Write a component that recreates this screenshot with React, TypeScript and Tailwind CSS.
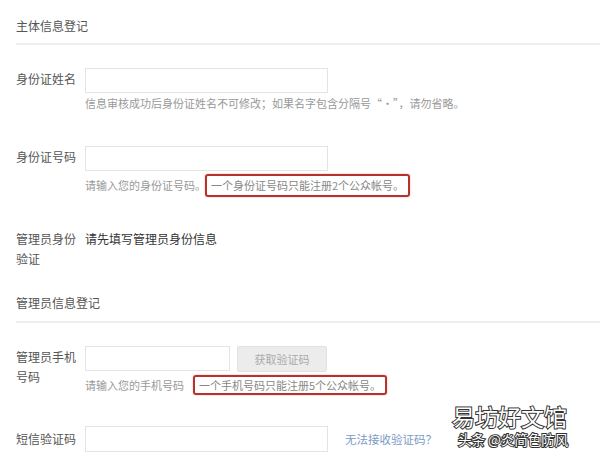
const font = { fontFamily: '"Noto Sans CJK SC", "Noto Sans", sans-serif' };

function Label({ children }: { children: React.ReactNode }) {
  return (
    <div className="w-[64px] mr-[5px] shrink-0 pt-[1px] text-[12px] leading-[20px] text-[#555]">
      {children}
    </div>
  );
}

function Input({ w = "w-[243px]", h = "h-[25px]" }: { w?: string; h?: string }) {
  return <div className={`${w} ${h} border border-[#e4e4e4] bg-white`} />;
}

function RedNote({ children }: { children: React.ReactNode }) {
  return (
    <span className="inline-flex items-center h-full border-2 border-[#b8322c] rounded-[3px] px-[4px] text-[11px] text-[#888] shadow-[0_0_2px_rgba(184,50,44,0.4)]">
      {children}
    </span>
  );
}

export default function App() {
  return (
    <div
      className="relative w-[600px] h-[453px] overflow-hidden bg-white pl-4 pt-[18px]"
      style={font}
    >
      <div className="text-[12px] leading-[16px] text-[#555]">主体信息登记</div>
      <div className="mt-[9px] h-[2px] bg-[#eeeeee]" />

      {/* 身份证姓名 */}
      <div className="mt-[23px] flex">
        <Label>身份证姓名</Label>
        <div>
          <Input />
          <div className="mt-[2px] text-[11px] leading-[16px] text-[#999] whitespace-nowrap">
            信息审核成功后身份证姓名不可修改；如果名字包含分隔号“·”，请勿省略。
          </div>
        </div>
      </div>

      {/* 身份证号码 */}
      <div className="mt-[35px] flex">
        <Label>身份证号码</Label>
        <div>
          <Input />
          <div className="mt-[3px] h-[23px] flex items-center text-[11px] text-[#999] whitespace-nowrap">
            <span className="mr-[-1px]">请输入您的身份证号码。</span>
            <RedNote>一个身份证号码只能注册2个公众帐号。</RedNote>
          </div>
        </div>
      </div>

      {/* 管理员身份验证 */}
      <div className="mt-[31px] flex">
        <Label>管理员身份验证</Label>
        <div className="pt-[1px] text-[12px] leading-[20px] text-[#333]">请先填写管理员身份信息</div>
      </div>

      <div className="mt-[26px] text-[12px] leading-[16px] text-[#555]">管理员信息登记</div>
      <div className="mt-[10px] h-[2px] bg-[#eeeeee]" />

      {/* 管理员手机号码 */}
      <div className="mt-[23px] flex">
        <Label>管理员手机号码</Label>
        <div>
          <div className="flex gap-[7px]">
            <Input w="w-[145px]" />
            <button className="w-[90px] h-[26px] rounded-[2px] border border-[#e2e2e2] bg-[#ececec] text-[11px] text-[#aaa]">
              获取验证码
            </button>
          </div>
          <div className="mt-[3px] h-[20px] flex items-center text-[11px] text-[#999] whitespace-nowrap">
            <span className="mr-[9px]">请输入您的手机号码</span>
            <RedNote>一个手机号码只能注册5个公众帐号。</RedNote>
          </div>
        </div>
      </div>

      {/* 短信验证码 */}
      <div className="mt-[31px] flex items-start">
        <Label>
          <span className="block pt-[2px]">短信验证码</span>
        </Label>
        <Input h="h-[26px]" />
        <div className="ml-[17px] pt-[4px] text-[11.5px] leading-[18px] text-[#7b9bc7]">无法接收验证码？</div>
      </div>

      {/* watermark */}
      <div className="absolute left-[452px] top-[405px] text-[23px] leading-[23px] text-white [-webkit-text-stroke:2px_#333] [paint-order:stroke_fill]">
        易坊好文馆
      </div>
      <div className="absolute left-[458px] top-[431px] text-[13.5px] leading-[16px] text-white [-webkit-text-stroke:2px_#333] [paint-order:stroke_fill] whitespace-nowrap">
        头条 @炎简色防风
      </div>
    </div>
  );
}
